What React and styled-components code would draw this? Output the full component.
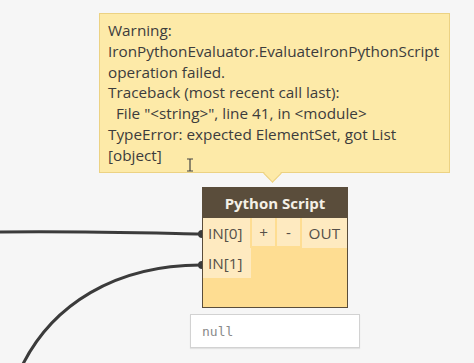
import React from "react";
import styled, { createGlobalStyle } from "styled-components";

const Global = createGlobalStyle`
  html, body { margin: 0; padding: 0; background: #f6f6f6; }
  body { font-family: "Open Sans", "Noto Sans", sans-serif; }
`;

const Canvas = styled.div`
  position: relative;
  width: 474px;
  height: 363px;
  overflow: hidden;
  background: #f6f6f6;
`;

const Wires = styled.svg`
  position: absolute;
  left: 0;
  top: 0;
`;

const Tooltip = styled.div`
  position: absolute;
  left: 99px;
  top: 13px;
  width: 351px;
  height: 160px;
  box-sizing: border-box;
  padding: 6px 8px;
  background: #fdeaa8;
  border: 1px solid #ecd283;
  color: #3c3c3c;
  font-size: 15.3px;
  line-height: 20.8px;
  white-space: pre;

  &::after {
    content: "";
    position: absolute;
    left: 166px;
    bottom: -8px;
    width: 12px;
    height: 12px;
    background: #fdeaa8;
    border-right: 1px solid #ecd283;
    border-bottom: 1px solid #ecd283;
    transform: rotate(45deg);
  }
`;

const Cursor = styled.svg`
  position: absolute;
  left: 184px;
  top: 158px;
`;

const Node = styled.div`
  position: absolute;
  left: 202px;
  top: 187px;
  width: 146px;
  height: 121px;
  box-sizing: border-box;
  border: 1px solid #5a4d3b;
  background: #fedd92;
  display: flex;
  flex-direction: column;
`;

const Header = styled.div`
  height: 30px;
  background: #5a4d3b;
  color: #f4f0e6;
  font-weight: 700;
  font-size: 15px;
  display: flex;
  align-items: center;
  justify-content: center;
`;

const Row = styled.div`
  display: flex;
  gap: 2px;
  height: 30px;
`;

const Port = styled.div`
  position: relative;
  width: ${(p) => p.$w}px;
  height: ${(p) => p.$h || 30}px;
  background: #feeac0;
  color: #555049;
  font-size: 15.3px;
  display: flex;
  align-items: center;
  justify-content: ${(p) => (p.$center ? "center" : "flex-start")};
  padding-left: ${(p) => (p.$center ? 0 : 5)}px;
  box-sizing: border-box;
`;

const Output = styled(Port)`
  justify-content: center;
  padding-left: 0;
`;

const Watch = styled.div`
  position: absolute;
  left: 190px;
  top: 314px;
  width: 170px;
  height: 34px;
  box-sizing: border-box;
  background: #fff;
  border: 1px solid #d2d2d2;
  box-shadow: 0 1px 1px rgba(0, 0, 0, 0.08);
  display: flex;
  align-items: center;
  padding-left: 11px;
  font-family: "DejaVu Sans Mono", "Liberation Mono", monospace;
  font-size: 13px;
  color: #8a8a8a;
`;

const message = `Warning:
IronPythonEvaluator.EvaluateIronPythonScript
operation failed.
Traceback (most recent call last):
  File "<string>", line 41, in <module>
TypeError: expected ElementSet, got List
[object]`;

export default function App() {
  return (
    <>
      <Global />
      <Canvas>
        <Wires width="474" height="363">
          <path d="M0,232 C80,231 150,233 201,234" fill="none" stroke="#3b3b3b" strokeWidth="3" />
          <path d="M201,265 C115,265 52,305 22,366" fill="none" stroke="#3b3b3b" strokeWidth="3" />
          <circle cx="202" cy="234" r="4" fill="#3b3b3b" />
          <circle cx="202" cy="265" r="4" fill="#3b3b3b" />
        </Wires>
        <Tooltip>{message}</Tooltip>
        <Cursor width="12" height="14" viewBox="0 0 12 14">
          <path d="M3,1 H9 M6,1 V13 M3,13 H9" stroke="#444" strokeWidth="1.2" fill="none" />
        </Cursor>
        <Node>
          <Header>Python Script</Header>
          <Row>
            <Port $w={48}>IN[0]</Port>
            <Port $w={23} $center $h={28}>+</Port>
            <Port $w={23} $center $h={28}>-</Port>
            <Output $w={46}>OUT</Output>
          </Row>
          <Row>
            <Port $w={48}>IN[1]</Port>
          </Row>
        </Node>
        <Watch>null</Watch>
      </Canvas>
    </>
  );
}
